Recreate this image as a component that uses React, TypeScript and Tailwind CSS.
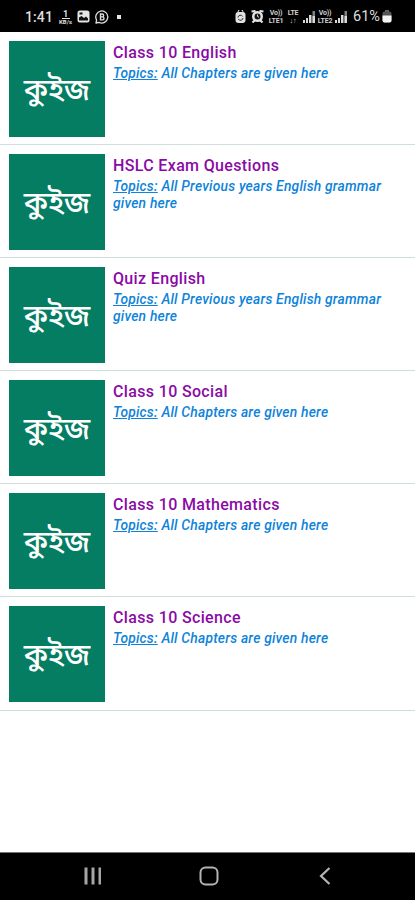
import React from "react";

type Quiz = {
  title: string;
  topics: string;
};

const quizzes: Quiz[] = [
  { title: "Class 10 English", topics: "All Chapters are given here" },
  {
    title: "HSLC Exam Questions",
    topics: "All Previous years English grammar given here",
  },
  {
    title: "Quiz English",
    topics: "All Previous years English grammar given here",
  },
  { title: "Class 10 Social", topics: "All Chapters are given here" },
  { title: "Class 10 Mathematics", topics: "All Chapters are given here" },
  { title: "Class 10 Science", topics: "All Chapters are given here" },
];

const Signal = () => (
  <svg width="13" height="13" viewBox="0 0 13 13" fill="#d8d8d8">
    <rect x="0" y="10" width="2" height="3" />
    <rect x="3" y="8" width="2" height="5" />
    <rect x="6" y="5" width="2.5" height="8" />
    <rect x="9.5" y="1" width="2.5" height="12" fill="#808080" />
    <rect x="9.5" y="6" width="2.5" height="7" />
  </svg>
);

const Network = ({ top, bottom }: { top: string; bottom: string }) => (
  <span className="flex flex-col items-center text-[7px] leading-[8px] font-bold tracking-[-0.2px] text-[#d0d0d0]">
    <span>{top}</span>
    <span>{bottom}</span>
  </span>
);

const StatusBar = () => (
  <div className="flex h-8 items-center justify-between bg-black pt-px pr-[23px] pl-[25px] text-[#dedede]">
    <div className="flex items-center">
      <span className="w-[33px] text-[14px] leading-none font-medium tracking-[0.1px]">
        1:41
      </span>
      <span className="flex w-[15px] flex-col items-center">
        <span className="text-[9px] leading-[8px] font-bold">1</span>
        <span className="h-px w-[8px] bg-[#dedede]" />
        <span className="text-[6px] leading-[5px] font-bold">KB/s</span>
      </span>
      <svg className="ml-1" width="13" height="13" viewBox="0 0 13 13">
        <rect x="0.5" y="0.5" width="12" height="12" rx="2.5" fill="#e6e6e6" />
        <path d="M2 10.5V7.5l2.5-1.5 2.5 2 2-1.5 2 2v2z" fill="#111" />
        <rect x="2.5" y="2.5" width="3" height="2" fill="#111" />
      </svg>
      <svg
        className="ml-[5px]"
        width="14"
        height="14"
        viewBox="0 0 14 14"
        fill="none"
        stroke="#dedede"
      >
        <path
          d="M1 13l.6-3A6 6 0 1 1 4 12.3z"
          strokeWidth="1.3"
          strokeLinejoin="round"
        />
        <path
          d="M5.5 4h1.7a1.4 1.4 0 0 1 0 2.9H5.5zM5.5 6.9h2a1.5 1.5 0 0 1 0 3h-2z"
          strokeWidth="1.4"
        />
      </svg>
      <span className="ml-2 size-1 bg-[#e6e6e6]" />
    </div>

    <div className="flex items-center">
      <svg width="11" height="13" viewBox="0 0 11 13">
        <path d="M3 3V2a2.5 2.5 0 0 1 5 0v1" fill="none" stroke="#dedede" />
        <rect x="0.5" y="2" width="10" height="11" rx="3" fill="#e2e2e2" />
        <path
          d="M3 7.5a2.5 2.5 0 0 1 4.7-1M8 8a2.5 2.5 0 0 1-4.7 1"
          fill="none"
          stroke="#333"
        />
      </svg>
      <svg className="ml-[5px]" width="13" height="13" viewBox="0 0 13 13">
        <path
          d="M.5 1.5l4-.5M12.5 1.5l-4-.5M1.5 12.5l2.5-2.5M11.5 12.5L9 10"
          stroke="#dedede"
          strokeWidth="2.2"
        />
        <circle cx="6.5" cy="6.5" r="5.5" fill="#e2e2e2" />
        <circle cx="6.5" cy="6.5" r="3" fill="#111" />
        <path d="M6.5 4.5v2l1.5.8" fill="none" stroke="#e2e2e2" />
      </svg>
      <span className="ml-1 flex w-4 justify-center">
        <Network top="Vo))" bottom="LTE1" />
      </span>
      <span className="ml-0.5 flex w-[14px] justify-center">
        <Network top="LTE" bottom="↓↑" />
      </span>
      <span className="ml-[3px]">
        <Signal />
      </span>
      <span className="ml-px flex w-4 justify-center">
        <Network top="Vo))" bottom="LTE2" />
      </span>
      <span className="ml-[2px]">
        <Signal />
      </span>
      <span className="ml-[5px] w-[29px] pt-0.5 text-[14.5px] leading-none whitespace-nowrap">
        61%
      </span>
      <svg width="10" height="13" viewBox="0 0 10 13">
        <rect x="3" y="0" width="4" height="2" fill="#666" />
        <rect x="0.5" y="1.5" width="9" height="11" rx="2" fill="#555" />
        <path d="M.5 5.5h9v5a2 2 0 0 1-2 2h-5a2 2 0 0 1-2-2z" fill="#f4f4f4" />
      </svg>
    </div>
  </div>
);

const QuizRow = ({ title, topics }: Quiz) => (
  <li className="flex h-[113.1px] border-b border-[#cfe0dc] pt-[9px] pl-[9px]">
    <div className="flex size-24 shrink-0 items-center justify-center bg-[#047d62]">
      <span
        lang="bn"
        className="relative top-[3px] font-['Noto_Sans_Bengali','Noto_Serif_Bengali','Noto_Sans',serif] text-[30px] leading-none font-medium text-white"
      >
        কুইজ
      </span>
    </div>
    <div className="w-[290px] pl-2">
      <h2 className="mt-[2px] text-[16px] leading-[20px] font-medium tracking-[0.35px] text-[#8a0aa5]">
        {title}
      </h2>
      <p className="mt-[2px] text-[13.8px] leading-[17px] font-medium tracking-[0.22px] text-[#0d83da] italic">
        <span className="inline-block underline">Topics:</span> {topics}
      </p>
    </div>
  </li>
);

const NavBar = () => (
  <div className="flex h-12 shrink-0 items-center justify-between border-t border-[#777] bg-black pr-[84px] pb-0.5 pl-[84px]">
    <svg width="18" height="18" viewBox="0 0 18 18" fill="#a6a6a6">
      <rect x="0.5" y="0.5" width="3" height="17" />
      <rect x="7.5" y="0.5" width="3" height="17" />
      <rect x="14.5" y="0.5" width="2.5" height="17" />
    </svg>
    <svg
      className="-ml-[3px]"
      width="20"
      height="20"
      viewBox="0 0 20 20"
      fill="none"
    >
      <rect
        x="1.5"
        y="1.5"
        width="17"
        height="17"
        rx="5"
        stroke="#b4b4b4"
        strokeWidth="2"
      />
    </svg>
    <svg width="12" height="18" viewBox="0 0 12 18" fill="none">
      <path d="M10.5 1L2 9l8.5 8" stroke="#b4b4b4" strokeWidth="2.2" />
    </svg>
  </div>
);

const App = () => {
  return (
    <div className="flex h-[900px] w-[415px] flex-col overflow-hidden bg-white font-['Roboto',sans-serif]">
      <StatusBar />
      <ul className="flex-1">
        {quizzes.map((quiz) => (
          <QuizRow key={quiz.title} {...quiz} />
        ))}
      </ul>
      <NavBar />
    </div>
  );
};

export default App;
